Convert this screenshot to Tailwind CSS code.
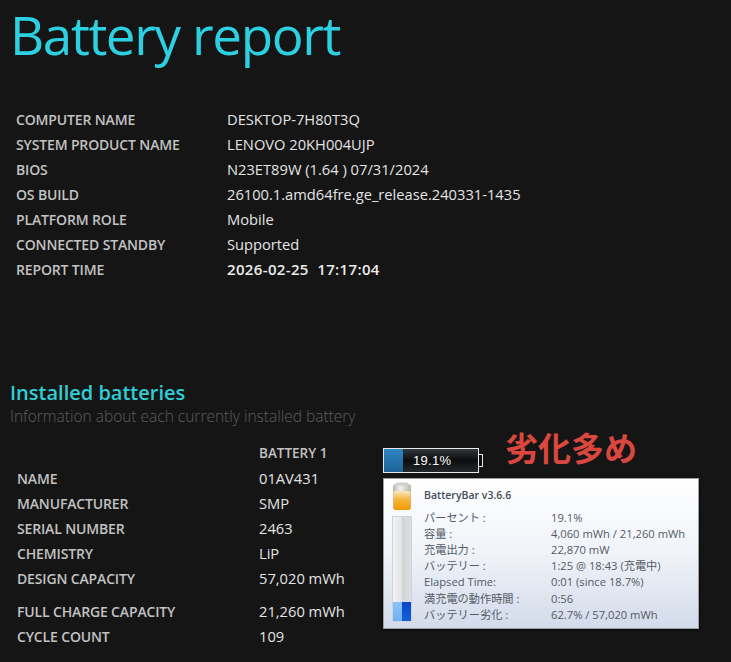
<!DOCTYPE html>
<html>
<head>
<meta charset="utf-8">
<script src="https://cdn.jsdelivr.net/npm/@tailwindcss/browser@4"></script>
</head>
<body class="m-0 bg-[#151515]">
<div class="relative w-[731px] h-[662px] overflow-hidden bg-[#151515] font-['Open_Sans','Noto_Sans_CJK_JP',sans-serif]">
  <h1 class="pl-[10px] pt-[3px] h-[107px] text-[53px] leading-[64px] font-normal text-[#2cd0e0] tracking-[-1.4px]">Battery report</h1>
  <div class="pl-[16px] grid grid-cols-[211px_1fr] auto-rows-[25px] items-center text-[14px]">
    <div class="font-semibold text-[#c2c2c2] tracking-[-0.15px]">COMPUTER NAME</div><div class="text-[14.7px] text-[#e4e4e4]">DESKTOP-7H80T3Q</div>
    <div class="font-semibold text-[#c2c2c2] tracking-[-0.15px]">SYSTEM PRODUCT NAME</div><div class="text-[14.7px] text-[#e4e4e4]">LENOVO 20KH004UJP</div>
    <div class="font-semibold text-[#c2c2c2] tracking-[-0.15px]">BIOS</div><div class="text-[14.7px] text-[#e4e4e4]">N23ET89W (1.64 ) 07/31/2024</div>
    <div class="font-semibold text-[#c2c2c2] tracking-[-0.15px]">OS BUILD</div><div class="text-[14.7px] text-[#e4e4e4]">26100.1.amd64fre.ge_release.240331-1435</div>
    <div class="font-semibold text-[#c2c2c2] tracking-[-0.15px]">PLATFORM ROLE</div><div class="text-[14.7px] text-[#e4e4e4]">Mobile</div>
    <div class="font-semibold text-[#c2c2c2] tracking-[-0.15px]">CONNECTED STANDBY</div><div class="text-[14.7px] text-[#e4e4e4]">Supported</div>
    <div class="font-semibold text-[#c2c2c2] tracking-[-0.15px]">REPORT TIME</div><div class="font-semibold text-[15px] tracking-[0.35px] text-[#ececec] whitespace-pre">2026-02-25  17:17:04</div>
  </div>
  <h2 class="mt-[98px] pl-[10px] h-[25px] text-[20px] leading-[26px] font-semibold text-[#2fcfd6]">Installed batteries</h2>
  <p class="pl-[10px] h-[24px] text-[15.5px] leading-[22px] font-light text-[#5d5d5d]">Information about each currently installed battery</p>
  <div class="mt-[12px] pl-[17px] grid grid-cols-[242px_1fr] auto-rows-[25px] items-center text-[14px]">
    <div></div><div class="font-semibold text-[#c2c2c2] text-[13.5px]">BATTERY 1</div>
    <div class="font-semibold text-[#c2c2c2] tracking-[-0.15px]">NAME</div><div class="text-[14.7px] text-[#e4e4e4]">01AV431</div>
    <div class="font-semibold text-[#c2c2c2] tracking-[-0.15px]">MANUFACTURER</div><div class="text-[14.7px] text-[#e4e4e4]">SMP</div>
    <div class="font-semibold text-[#c2c2c2] tracking-[-0.15px]">SERIAL NUMBER</div><div class="text-[14.7px] text-[#e4e4e4]">2463</div>
    <div class="font-semibold text-[#c2c2c2] tracking-[-0.15px]">CHEMISTRY</div><div class="text-[14.7px] text-[#e4e4e4]">LiP</div>
    <div class="font-semibold text-[#c2c2c2] tracking-[-0.15px]">DESIGN CAPACITY</div><div class="text-[14.7px] text-[#e4e4e4]">57,020 mWh</div>
    <div class="mt-[16px] h-[25px] leading-[25px] font-semibold text-[#c2c2c2] tracking-[-0.15px]">FULL CHARGE CAPACITY</div><div class="mt-[16px] h-[25px] leading-[25px] text-[14.7px] text-[#e4e4e4]">21,260 mWh</div>
    <div class="mt-[16px] h-[25px] leading-[25px] font-semibold text-[#c2c2c2] tracking-[-0.15px]">CYCLE COUNT</div><div class="mt-[16px] h-[25px] leading-[25px] text-[14.7px] text-[#e4e4e4]">109</div>
  </div>

  <div class="absolute left-[505px] top-[427px] text-[33px] leading-[40px] font-semibold text-[#d9473f] font-['Noto_Sans_CJK_JP',sans-serif]">劣化多め</div>

  <div class="absolute left-[383px] top-[448px] w-[100px] h-[25px] flex items-center">
    <div class="relative w-[96px] h-[25px] border border-[#e8e8e8] bg-gradient-to-b from-[#34383c] via-[#0c0d0f] to-[#25282a] overflow-hidden">
      <div class="absolute left-0 top-0 bottom-0 w-[19px] bg-gradient-to-b from-[#2f86c4] to-[#1d6296]"></div>
      <div class="absolute left-[29px] top-0 bottom-0 flex items-center text-[13px] text-white font-['Liberation_Sans',sans-serif] tracking-[0.3px]">19.1%</div>
      <div class="absolute right-[1px] bottom-[1px] w-[6px] h-[6px] bg-[radial-gradient(#9a9a9a_40%,transparent_45%)] bg-[length:2px_2px]"></div>
    </div>
    <div class="w-[4px] h-[13px] bg-[#0c0d0f] border border-l-0 border-[#e8e8e8]"></div>
  </div>

  <div class="absolute left-[383px] top-[478px] w-[316px] h-[151px] bg-gradient-to-b from-white via-[#f0f3f8] to-[#d3daea] border border-[#9aa0a8] shadow-[0_1px_3px_rgba(0,0,0,0.6)] flex font-['Noto_Sans_CJK_JP',sans-serif] text-[#525a68]">
    <div class="w-[40px] shrink-0 pl-[8px] pt-[3px] flex flex-col">
      <svg width="20" height="28" viewBox="0 0 20 28">
        <defs>
          <linearGradient id="o" x1="0" y1="0" x2="0" y2="1"><stop offset="0" stop-color="#f6e7c4"/><stop offset="0.45" stop-color="#f7b53a"/><stop offset="1" stop-color="#f09a05"/></linearGradient>
          <linearGradient id="g" x1="0" y1="0" x2="1" y2="0"><stop offset="0" stop-color="#b8b4aa"/><stop offset="0.4" stop-color="#f4f2ec"/><stop offset="1" stop-color="#b8b4aa"/></linearGradient>
        </defs>
        <rect x="1" y="2" width="18" height="26" rx="3" fill="url(#g)"/>
        <rect x="4" y="0.5" width="12" height="3" rx="1" fill="#cfcfcf"/>
        <rect x="1.5" y="9" width="17" height="19" rx="2" fill="url(#o)"/>
      </svg>
      <div class="mt-[6px] relative w-[20px] h-[106px] flex bg-[#e6e8ea] border border-[#d0d3d8]">
        <div class="flex-1 flex flex-col bg-gradient-to-r from-[#f2f3f4] to-[#e2e3e5]"><div class="flex-1"></div><div class="h-[19px] bg-gradient-to-b from-[#8ec2f6] to-[#6fb0f0]"></div></div>
        <div class="flex-1 flex flex-col bg-gradient-to-r from-[#d0d2d3] to-[#dcdee0]"><div class="flex-1"></div><div class="h-[19px] bg-gradient-to-b from-[#0a46c8] to-[#1560d8]"></div></div>
      </div>
    </div>
    <div class="flex-1 pt-[8px]">
      <div class="h-[23px] text-[10.5px] leading-[16px] font-['Open_Sans',sans-serif] font-semibold text-[#444c58]">BatteryBar v3.6.6</div>
      <div class="grid grid-cols-[127px_1fr] auto-rows-[16.1px] items-center text-[11.2px] leading-[16px] font-['Open_Sans','Noto_Sans_CJK_JP',sans-serif]">
        <div>パーセント :</div><div>19.1%</div>
        <div>容量 :</div><div class="whitespace-nowrap">4,060 mWh / 21,260 mWh</div>
        <div>充電出力 :</div><div>22,870 mW</div>
        <div>バッテリー :</div><div>1:25 @ 18:43 (充電中)</div>
        <div>Elapsed Time:</div><div>0:01 (since 18.7%)</div>
        <div>満充電の動作時間 :</div><div>0:56</div>
        <div>バッテリー劣化 :</div><div>62.7% / 57,020 mWh</div>
      </div>
    </div>
  </div>
</div>
</body>
</html>
